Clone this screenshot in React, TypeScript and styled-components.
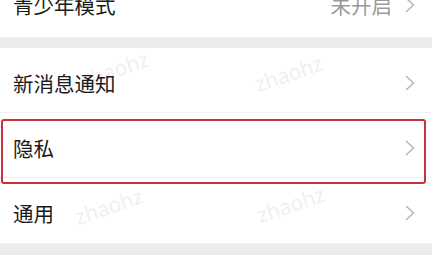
import React from "react";
import styled, { createGlobalStyle } from "styled-components";

const Global = createGlobalStyle`
  html, body { margin: 0; padding: 0; background: #ffffff; overflow: hidden; }
  body { font-family: "Noto Sans CJK SC", "Noto Sans", sans-serif; }
`;

const Page = styled.div`
  position: relative;
  width: 432px;
  height: 266px;
  overflow: hidden;
  background: #ffffff;
`;

const Group = styled.div<{ $offset?: number }>`
  display: flex;
  flex-direction: column;
  background: #ffffff;
  margin-top: ${(p) => p.$offset ?? 0}px;
`;

const Gap = styled.div<{ $h: number }>`
  height: ${(p) => p.$h}px;
  background: #ececec;
  border-top: 1px solid #f3f3f3;
  box-sizing: border-box;
`;

const Row = styled.div<{ $line?: boolean; $pad?: number }>`
  position: relative;
  height: 65px;
  box-sizing: border-box;
  display: flex;
  align-items: center;
  padding: ${(p) => p.$pad ?? 4}px 17px 0 13px;
  ${(p) =>
    p.$line
      ? `&::after { content: ""; position: absolute; left: 0; right: 0; bottom: 0; height: 1px; background: #f2f2f2; }`
      : ""}
`;

const Label = styled.span`
  flex: 1;
  font-size: 20.5px;
  color: #1a1a1a;
  position: relative;
  z-index: 2;
`;

const Value = styled.span`
  font-size: 20.5px;
  color: #9a9a9a;
  margin-right: 13px;
`;

const Chevron = () => (
  <svg width="10" height="16" viewBox="0 0 10 16" style={{ display: "block" }}>
    <path d="M1.5 1.5 L8.5 8 L1.5 14.5" fill="none" stroke="#b4b4b4" strokeWidth="1.5" strokeLinecap="round" strokeLinejoin="round" />
  </svg>
);

const Highlight = styled.div`
  position: absolute;
  left: 1px;
  right: 6px;
  top: 6px;
  height: 65px;
  box-sizing: border-box;
  border: 2px solid #c9323a;
  border-radius: 3px;
  pointer-events: none;
  z-index: 3;
`;

const Watermark = styled.span<{ $x: number; $y: number }>`
  position: absolute;
  left: ${(p) => p.$x}px;
  top: ${(p) => p.$y}px;
  font-family: "Noto Sans", sans-serif;
  font-size: 21px;
  color: #f0f0f0;
  transform: rotate(-19deg);
  transform-origin: left bottom;
  z-index: 1;
  pointer-events: none;
`;

export default function App() {
  return (
    <>
      <Global />
      <Page>
        <Group $offset={-28}>
          <Row $pad={0}>
            <Label>青少年模式</Label>
            <Value>未开启</Value>
            <Chevron />
          </Row>
        </Group>
        <Gap $h={11} />
        <Group>
          <Row $line>
            <Watermark $x={86} $y={18}>zhaohz</Watermark>
            <Watermark $x={260} $y={22}>zhaohz</Watermark>
            <Label>新消息通知</Label>
            <Chevron />
          </Row>
          <Row $line>
            <Highlight />
            <Label>隐私</Label>
            <Chevron />
          </Row>
          <Row>
            <Watermark $x={80} $y={25}>zhaohz</Watermark>
            <Watermark $x={262} $y={23}>zhaohz</Watermark>
            <Label>通用</Label>
            <Chevron />
          </Row>
        </Group>
        <Gap $h={12} />
      </Page>
    </>
  );
}
